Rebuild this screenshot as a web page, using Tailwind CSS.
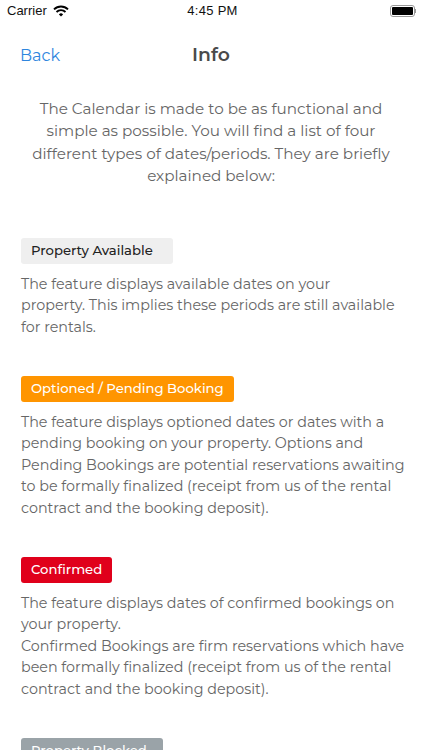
<!doctype html>
<html><head><script src="https://cdn.jsdelivr.net/npm/@tailwindcss/browser@4"></script></head>
<body class="bg-white overflow-hidden">
<div class="w-[422px] h-[750px] overflow-hidden font-['Montserrat','Lato','Open_Sans',sans-serif] text-[#666666]">
<div class="h-[22px] flex items-center justify-between pl-[7px] pr-[6px] relative text-[#111] font-['Liberation_Sans'] text-[13px]">
<div class="flex items-center gap-[6px]"><span>Carrier</span>
<svg width="16" height="12" viewBox="0 0 16 12" fill="none" stroke="#000" stroke-width="1.9"><path d="M1 4.4 A10 10 0 0 1 15 4.4"/><path d="M3.5 7 A6.4 6.4 0 0 1 12.5 7"/><path d="M8 11.6 L5.9 9.4 A3 3 0 0 1 10.1 9.4 Z" fill="#000" stroke="none"/></svg></div>
<span class="absolute left-[3px] right-0 text-center font-medium tracking-[0.3px]">4:45 PM</span>
<div class="flex items-center"><div class="w-[25px] h-[12px] border border-[#999] rounded-[3px] p-px"><div class="w-full h-full bg-black rounded-[1px]"></div></div><div class="w-[1px] h-[4px] bg-[#999]"></div></div>
</div>
<div class="relative h-[48px] mt-[9px] flex items-center justify-center">
<span class="absolute left-[20px] top-[13px] text-[16px] text-[#2e86de]">Back</span>
<span class="text-[18.8px] font-semibold text-[#4a4a4a]">Info</span>
</div>
<p class="mt-[19px] px-[21px] text-center text-[15.2px] leading-[22.4px]">The Calendar is made to be as functional and simple as possible. You will find a list of four different types of dates/periods. They are briefly explained below:</p>
<div class="px-[21px] mt-[50px] flex flex-col gap-[37.5px] text-[14.3px] leading-[21.5px] whitespace-nowrap">
<section><span class="block h-[26px] leading-[25px] px-[10px] w-[152px] rounded-[3px] bg-[#efefef] text-[#222] font-medium text-[13.2px]">Property Available</span>
<p class="mt-[10px]">The feature displays available dates on your<br>property. This implies these periods are still available<br>for rentals.</p></section>
<section><span class="block w-[213px] h-[26px] leading-[25px] px-[10px] rounded-[3px] bg-[#ff9500] text-white font-medium text-[13.2px]">Optioned / Pending Booking</span>
<p class="mt-[10px]">The feature displays optioned dates or dates with a<br>pending booking on your property. Options and<br>Pending Bookings are potential reservations awaiting<br>to be formally finalized (receipt from us of the rental<br>contract and the booking deposit).</p></section>
<section><span class="block w-[91px] h-[26px] leading-[25px] px-[10px] rounded-[3px] bg-[#e0001b] text-white font-medium text-[13.2px]">Confirmed</span>
<p class="mt-[10px]">The feature displays dates of confirmed bookings on<br>your property.<br>Confirmed Bookings are firm reservations which have<br>been formally finalized (receipt from us of the rental<br>contract and the booking deposit).</p></section>
<section><span class="block w-[142px] h-[26px] leading-[25px] px-[10px] rounded-[3px] bg-[#9aa3a8] text-white font-medium text-[13.2px]">Property Blocked</span></section>
</div>
</div>
</body></html>
